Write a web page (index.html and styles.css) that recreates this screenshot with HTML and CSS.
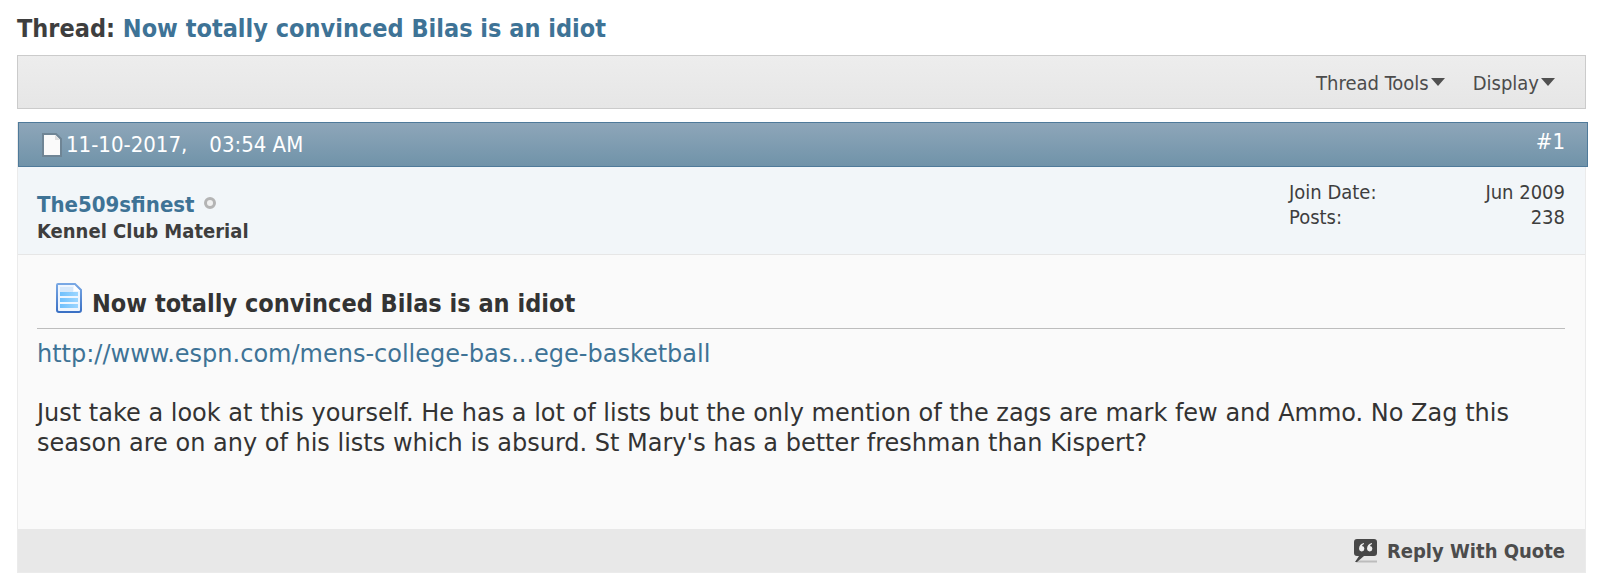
FILE: index.html
```html
<!DOCTYPE html>
<html lang="en">

<head>
    <meta charset="UTF-8">
    <meta name="viewport" content="width=device-width, initial-scale=1.0">
    <title>Now totally convinced Bilas is an idiot</title>
    <link rel="stylesheet" href="styles.css">
</head>

<body>
    <h1 class="thread-title">Thread: <a href="#">Now totally convinced Bilas is an idiot</a></h1>

    <div class="toolbar">
        <button class="popup" type="button">Thread Tools<svg class="arrow" viewBox="0 0 14 8"><path d="M0 0h14L7 8z"/></svg></button>
        <button class="popup" type="button">Display<svg class="arrow" viewBox="0 0 14 8"><path d="M0 0h14L7 8z"/></svg></button>
    </div>

    <article class="post">
        <header class="post-head">
            <svg class="post-icon" viewBox="0 0 22 24">
                <path d="M2 1h13l5 5v17H2z" fill="#fafafa" stroke="#6f8595" stroke-width="2"/>
                <path d="M14 2v5h5z" fill="#dedede"/>
            </svg>
            <span class="date">11-10-2017,</span>
            <span class="time">03:54 AM</span>
            <a class="post-number" href="#">#1</a>
        </header>

        <section class="user">
            <div>
                <div class="user-name">
                    <a href="#">The509sfinest</a>
                    <span class="offline"></span>
                </div>
                <div class="user-title">Kennel Club Material</div>
            </div>
            <dl class="user-stats">
                <dt>Join Date:</dt>
                <dd>Jun 2009</dd>
                <dt>Posts:</dt>
                <dd>238</dd>
            </dl>
        </section>

        <section class="post-body">
            <h2 class="post-title">
                <svg class="title-icon" viewBox="0 0 26 30">
                    <defs>
                        <linearGradient id="edge" x1="0" y1="0" x2="0" y2="1">
                            <stop offset="0" stop-color="#79a8e4"/>
                            <stop offset="1" stop-color="#3a70c4"/>
                        </linearGradient>
                        <linearGradient id="line" x1="0" y1="0" x2="1" y2="0">
                            <stop offset="0" stop-color="#70c0fc"/>
                            <stop offset="1" stop-color="#9cd6ff"/>
                        </linearGradient>
                    </defs>
                    <path d="M2 1h17l6 6v20q0 2-2 2H3q-2 0-2-2V2q0-1 1-1z" fill="#eef6ff" stroke="url(#edge)" stroke-width="2"/>
                    <path d="M4 4h13v5H4z" fill="#d5e8fb"/>
                    <path d="M18 2v6h6z" fill="#fff"/>
                    <path d="M4 9h18v4H4zM4 15h18v4H4zM4 21h18v4H4z" fill="url(#line)"/>
                </svg>
                Now totally convinced Bilas is an idiot
            </h2>
            <div class="post-text">
                <p><a href="#">http://www.espn.com/mens-college-bas...ege-basketball</a></p>
                <p>Just take a look at this yourself. He has a lot of lists but the only mention of the zags are mark few and Ammo. No Zag this season are on any of his lists which is absurd. St Mary's has a better freshman than Kispert?</p>
            </div>
        </section>

        <footer class="post-foot">
            <a class="reply" href="#">
                <svg class="reply-icon" viewBox="0 0 26 26">
                    <path d="M4 23.500h21" stroke="#bcbcbc" stroke-width="2"/>
                    <path d="M5 1h17q3 0 3 3v11q0 3-3 3H12l-7 6H3l4-6H5q-3 0-3-3V4q0-3 3-3z" fill="#484848"/>
                    <path d="M12 5Q7 6 7 11a2.700 2.700 0 1 0 3-3q0-1 2-2zM20 5Q15 6 15 11a2.700 2.700 0 1 0 3-3q0-1 2-2z" fill="#eee"/>
                </svg>
                Reply With Quote
            </a>
        </footer>
    </article>
</body>

</html>
```

FILE: styles.css
```css
body {
    margin: 0;
    padding: 12px 14px 8px 17px;
    font-family: "DejaVu Sans Condensed", Tahoma, sans-serif;
    font-size: 20px;
    color: #3e3e3e;
    background-color: #fff;
}

a {
    color: #3e7396;
    text-decoration: none;
}

a:hover {
    text-decoration: underline;
}

.thread-title {
    margin: 0 0 9px;
    font-size: 25px;
    line-height: 34px;
}

.toolbar {
    display: flex;
    justify-content: flex-end;
    align-items: center;
    gap: 28px;
    height: 52px;
    padding: 0 30px;
    border: 1px solid #cbcbcb;
    background: linear-gradient(#ededed, #e6e6e6);
}

.popup {
    display: flex;
    align-items: center;
    gap: 2px;
    padding: 2px 0 0;
    border: none;
    background: transparent;
    font: inherit;
    color: #4c4c4c;
    cursor: pointer;
}

.arrow {
    width: 14px;
    height: 8px;
    margin-bottom: 3px;
    fill: #505050;
}

.post {
    margin-top: 13px;
    border: 1px solid #ebebeb;
    border-top: none;
}

.post-head {
    display: flex;
    align-items: center;
    height: 43px;
    margin-right: -3px;
    padding: 0 22px;
    border: 1px solid #4f7a9a;
    background: linear-gradient(#8ea6b9, #7093a9);
    font-size: 22px;
    color: #fff;
}

.post-icon {
    width: 22px;
    height: 24px;
    margin-right: 3px;
}

.date {
    margin-right: 22px;
}

.post-number {
    margin-left: auto;
    padding-bottom: 6px;
    color: #fff;
}

.user {
    display: flex;
    justify-content: space-between;
    padding: 13px 20px 10px 19px;
    border-bottom: 1px solid #e6e6e6;
    background-color: #f2f6f9;
}

.user-name {
    display: flex;
    align-items: center;
    gap: 9px;
    padding-top: 12px;
    font-size: 22px;
    line-height: 26px;
    font-weight: bold;
}

.offline {
    width: 6px;
    height: 6px;
    margin-bottom: 4px;
    border: 3px solid #b4b4b4;
    border-radius: 50%;
    background-color: #f0f0f0;
}

.user-title {
    font-weight: bold;
    line-height: 26px;
}

.user-stats {
    display: grid;
    grid-template-columns: auto auto;
    align-content: start;
    justify-content: space-between;
    width: 276px;
    margin: 0;
    line-height: 25px;
}

.user-stats dd {
    margin: 0;
    text-align: right;
}

.post-body {
    padding: 28px 20px 12px 19px;
    background-color: #fafafa;
    color: #333;
}

.post-title {
    display: flex;
    align-items: flex-start;
    gap: 10px;
    margin: 0 0 10px;
    padding: 0 0 3px 19px;
    border-bottom: 1px solid #bdbdbd;
    font-size: 25px;
    line-height: 42px;
}

.title-icon {
    width: 26px;
    height: 30px;
}

.post-text {
    min-height: 178px;
    font-family: "DejaVu Sans", Verdana, sans-serif;
    font-size: 24px;
    line-height: 30px;
}

.post-text p {
    margin: 0 0 29px;
}

.post-foot {
    display: flex;
    justify-content: flex-end;
    padding: 9px 20px 8px;
    background-color: #e8e8e8;
}

.reply {
    display: flex;
    align-items: center;
    gap: 9px;
    line-height: 26px;
    font-weight: bold;
    color: #4c4c4c;
}

.reply-icon {
    width: 26px;
    height: 26px;
}
```
